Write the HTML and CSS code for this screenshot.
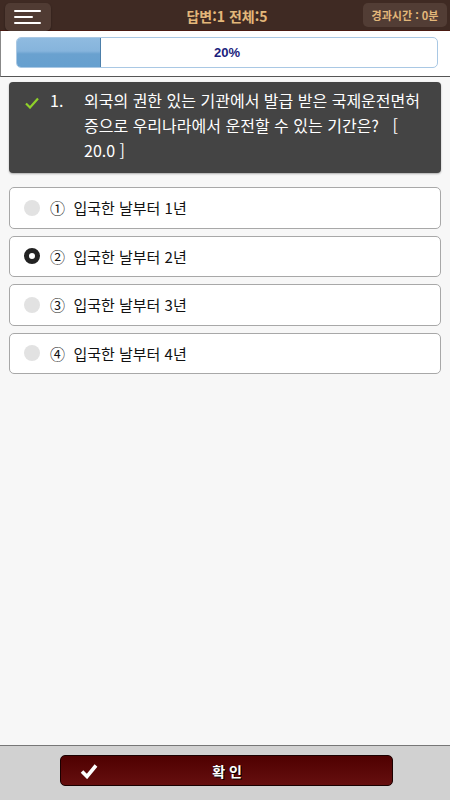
FILE: index.html
```html
<!DOCTYPE html>
<html lang="ko">
<head>
    <meta charset="UTF-8">
    <meta name="viewport" content="width=device-width, initial-scale=1.0">
    <title>문제풀이</title>
    <link rel="stylesheet" href="styles.css">
</head>
<body>
    <header class="top-bar">
        <button class="menu-btn" aria-label="메뉴">
            <span class="bar"></span>
            <span class="bar short"></span>
            <span class="bar"></span>
        </button>
        <div class="title">답변:1 전체:5</div>
        <div class="timer">경과시간 : 0분</div>
    </header>

    <div class="progress-area">
        <div class="progress">
            <div class="progress-fill" style="width: 20%"></div>
            <span class="progress-label">20%</span>
        </div>
    </div>

    <main class="content">
        <div class="question">
            <svg class="q-check" width="14" height="12" viewBox="0 0 14 12">
                <path d="M1 6.5 L5 10.5 L13 1.5" fill="none" stroke="#8fd12a" stroke-width="2.2"/>
            </svg>
            <span class="q-num">1.</span>
            <p class="q-text">외국의 권한 있는 기관에서 발급 받은 국제운전면허증으로 우리나라에서 운전할 수 있는 기간은? &nbsp; [ <span class="nowrap">20.0 ]</span></p>
        </div>

        <ul class="options">
            <li class="option"><span class="radio"></span>① &nbsp;입국한 날부터 1년</li>
            <li class="option selected"><span class="radio"></span>② &nbsp;입국한 날부터 2년</li>
            <li class="option"><span class="radio"></span>③ &nbsp;입국한 날부터 3년</li>
            <li class="option"><span class="radio"></span>④ &nbsp;입국한 날부터 4년</li>
        </ul>
    </main>

    <footer class="bottom-bar">
        <button class="confirm-btn">
            <svg class="confirm-check" width="18" height="16" viewBox="0 0 18 16">
                <path d="M2 8.5 L7 13.5 L16 2.5" fill="none" stroke="#fff" stroke-width="3.6"/>
            </svg>
            <span>확 인</span>
        </button>
    </footer>
</body>
</html>
```

FILE: styles.css
```css
* { box-sizing: border-box; }
html, body { height: 100%; }
body {
    margin: 0;
    background: #f7f7f7;
    font-family: "Noto Sans CJK KR", "Noto Sans", sans-serif;
    display: flex;
    flex-direction: column;
}

/* header */
.top-bar {
    height: 31px;
    background: #3f2a23;
    border-bottom: 1px solid #4a1a12;
    display: grid;
    grid-template-columns: 1fr auto 1fr;
    align-items: start;
    padding: 3px 3px 0 5px;
}
.menu-btn {
    width: 46px;
    height: 28px;
    background: #503b33;
    border: none;
    border-radius: 5px;
    display: flex;
    flex-direction: column;
    justify-content: center;
    gap: 4px;
    padding: 0 0 0 9px;
    box-shadow: 0 1px 2px rgba(0, 0, 0, 0.4);
}
.menu-btn .bar {
    display: block;
    width: 27px;
    height: 2px;
    background: #fff;
    border-radius: 1px;
}
.menu-btn .bar.short { width: 19px; }
.title {
    text-align: center;
    color: #e3b77a;
    font-weight: bold;
    font-size: 14px;
    line-height: 26px;
    padding-left: 2px;
}
.timer {
    justify-self: end;
    width: 84px;
    height: 24px;
    background: #523d35;
    border-radius: 5px;
    color: #e3b77a;
    font-size: 11px;
    font-weight: bold;
    line-height: 24px;
    text-align: center;
}

/* progress */
.progress-area {
    background: #fff;
    padding: 6px 12px 8px 15px;
    border-bottom: 1px solid #555;
    border-left: 1px solid #888;
}
.progress {
    position: relative;
    height: 31px;
    border: 1px solid #a9c8e4;
    border-radius: 5px;
    background: #fff;
    overflow: hidden;
}
.progress-fill {
    height: 100%;
    background: linear-gradient(#8fbbe0 0%, #86b4dc 45%, #6aa1cf 55%, #66a0cf 100%);
    border-right: 1px solid #4c7faa;
}
.progress-label {
    position: absolute;
    left: 0;
    right: 0;
    top: 0;
    line-height: 29px;
    text-align: center;
    color: #1a1d7c;
    font-weight: bold;
    font-size: 13px;
    font-family: "Liberation Sans", Arial, sans-serif;
}

/* question */
.content {
    flex: 1;
    padding: 5px 9px 0 9px;
}
.question {
    background: #444;
    border-radius: 4px;
    color: #fff;
    display: flex;
    align-items: flex-start;
    padding: 6px 20px 10px 16px;
    box-shadow: 0 1px 2px rgba(0, 0, 0, 0.3);
}
.q-check { margin-top: 9px; flex: none; }
.q-num {
    flex: none;
    width: 45px;
    padding-left: 11px;
    font-size: 16px;
    line-height: 25px;
}
.q-text {
    margin: 0;
    font-size: 16px;
    line-height: 25px;
    word-break: break-all;
}
.q-text .nowrap { white-space: nowrap; }

/* options */
.options {
    list-style: none;
    margin: 14px 0 0;
    padding: 0;
    display: flex;
    flex-direction: column;
    gap: 7px;
}
.option {
    height: 41.5px;
    background: #fff;
    border: 1px solid #a8a8a8;
    border-radius: 5px;
    display: flex;
    align-items: center;
    padding-left: 14px;
    font-size: 15px;
    color: #111;
}
.radio {
    width: 16px;
    height: 16px;
    border-radius: 50%;
    background: #e2e2e2;
    margin-right: 10px;
    flex: none;
}
.option.selected .radio {
    background: #fff;
    border: 5px solid #222;
}

/* footer */
.bottom-bar {
    height: 55px;
    background: #d1d1d1;
    border-top: 1px solid #777;
    padding: 9px 57px 0 60px;
}
.confirm-btn {
    width: 100%;
    height: 31px;
    border: 1px solid #1a0000;
    border-radius: 5px;
    background: linear-gradient(#4f0000, #650f0f);
    color: #fff;
    display: flex;
    align-items: center;
    padding: 0 0 0 19px;
    font-family: "Noto Sans CJK KR", sans-serif;
    font-weight: bold;
    font-size: 14px;
    text-shadow: 1px 1px 0 #000;
}
.confirm-check { flex: none; }
.confirm-btn span {
    flex: 1;
    text-align: center;
    padding-right: 36px;
}
```
